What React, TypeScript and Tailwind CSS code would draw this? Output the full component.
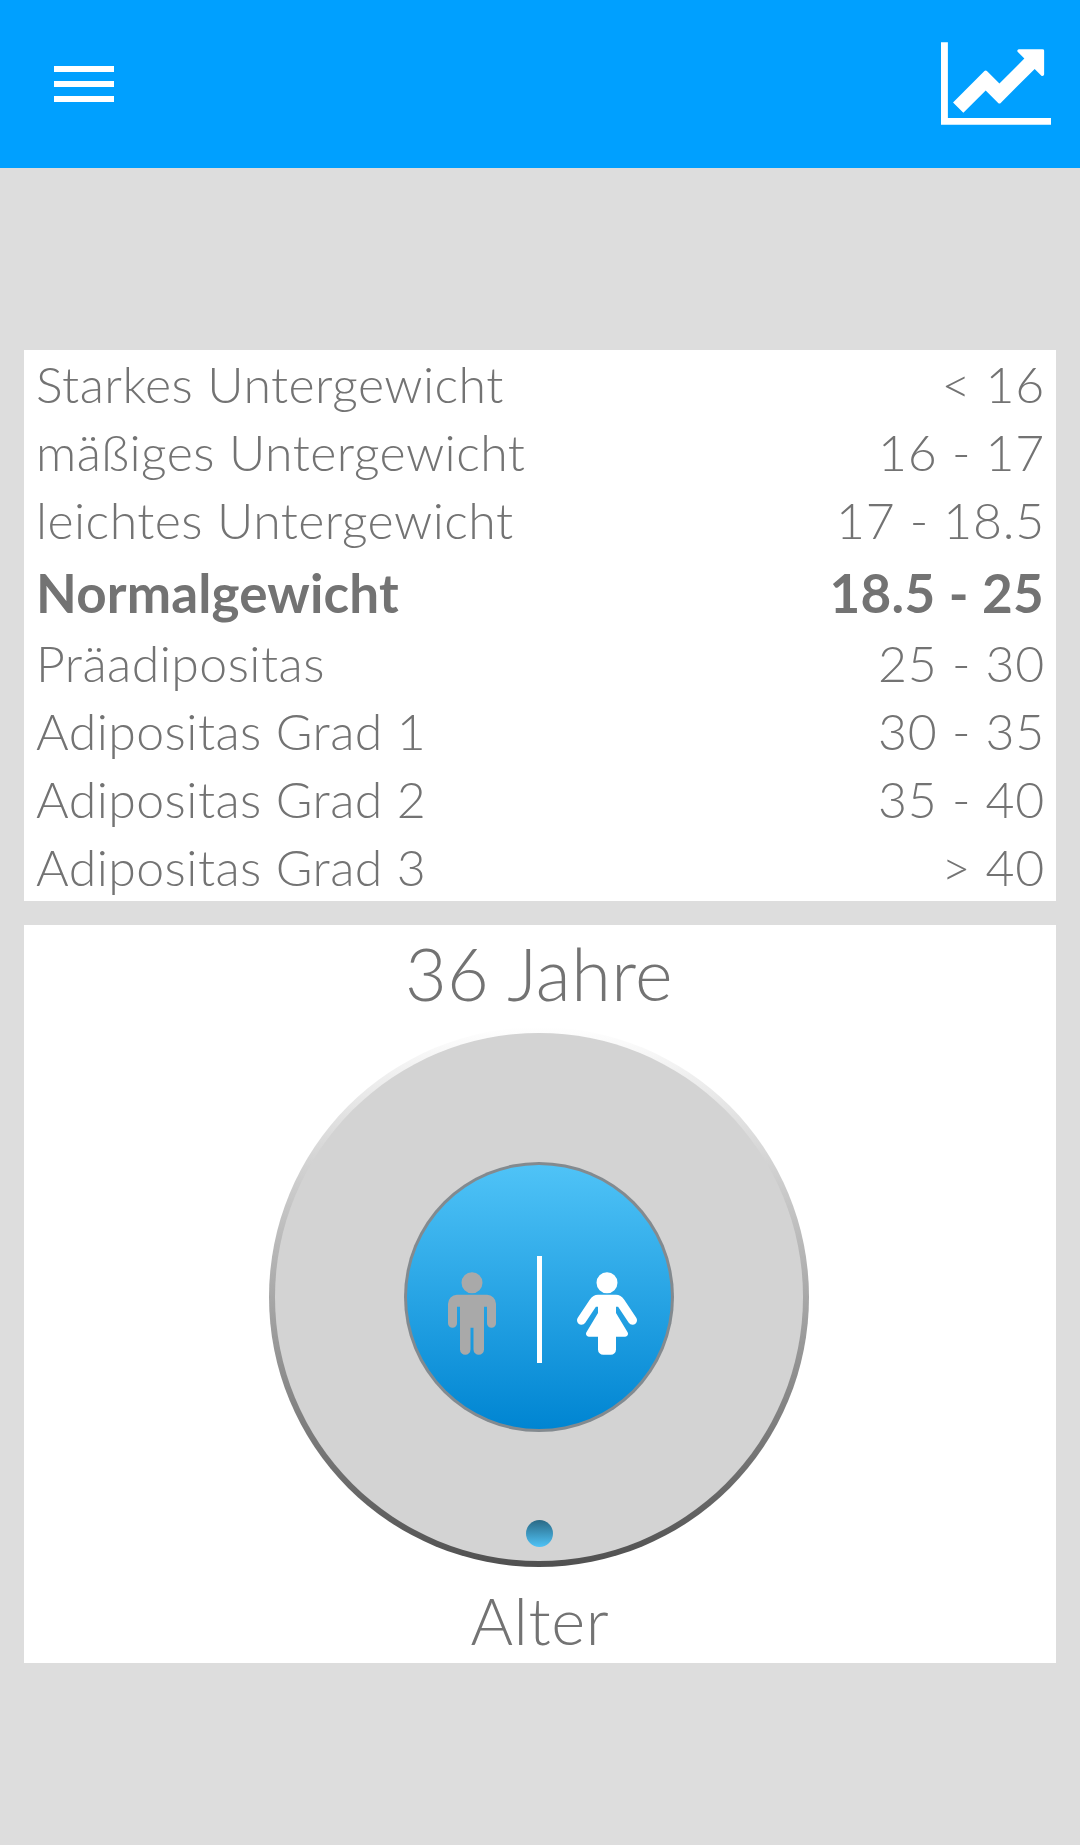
type Category = {
  label: string;
  range: string;
  active?: boolean;
};

const categories: Category[] = [
  { label: "Starkes Untergewicht", range: "< 16" },
  { label: "mäßiges Untergewicht", range: "16 - 17" },
  { label: "leichtes Untergewicht", range: "17 - 18.5" },
  { label: "Normalgewicht", range: "18.5 - 25", active: true },
  { label: "Präadipositas", range: "25 - 30" },
  { label: "Adipositas Grad 1", range: "30 - 35" },
  { label: "Adipositas Grad 2", range: "35 - 40" },
  { label: "Adipositas Grad 3", range: "> 40" },
];

const ChartIcon = () => (
  <svg viewBox="0 -1408 2048 1536" className="h-[83px] w-[110px] fill-white">
    <path
      transform="scale(1,-1)"
      d="M2048 0v-128h-2048v1536h128v-1408h1920zM1920 1248v-435q0 -21 -19.5 -29.5t-35.5 7.5l-121 121l-633 -633q-10 -10 -23 -10t-23 10l-233 233l-416 -416l-192 192l585 585q10 10 23 10t23 -10l233 -233l464 464l-121 121q-16 16 -7.5 35.5t29.5 19.5h435q14 0 23 -9t9 -23z"
    />
  </svg>
);

const MaleIcon = () => (
  <svg viewBox="0 -1504 1024 1760" className="h-[83px] w-12 fill-[#a9a9a9]">
    <path
      transform="scale(1,-1)"
      d="M1024 832v-416q0 -40 -28 -68t-68 -28t-68 28t-28 68v352h-64v-912q0 -46 -33 -79t-79 -33t-79 33t-33 79v464h-64v-464q0 -46 -33 -79t-79 -33t-79 33t-33 79v912h-64v-352q0 -40 -28 -68t-68 -28t-68 28t-28 68v416q0 80 56 136t136 56h640q80 0 136 -56t56 -136zM736 1280q0 -93 -65.5 -158.5t-158.5 -65.5t-158.5 65.5t-65.5 158.5t65.5 158.5t158.5 65.5t158.5 -65.5t65.5 -158.5z"
    />
  </svg>
);

const FemaleIcon = () => (
  <svg viewBox="0 -1504 1280 1760" className="h-[83px] w-[60px] fill-white">
    <path
      transform="scale(1,-1)"
      d="M1280 480q0 -40 -28 -68t-68 -28q-51 0 -80 43l-227 341h-45v-132l247 -411q9 -15 9 -33q0 -26 -19 -45t-45 -19h-192v-272q0 -46 -33 -79t-79 -33h-160q-46 0 -79 33t-33 79v272h-192q-26 0 -45 19t-19 45q0 18 9 33l247 411v132h-45l-227 -341q-29 -43 -80 -43q-40 0 -68 28t-28 68q0 29 16 53l256 384q73 107 176 107h384q103 0 176 -107l256 -384q16 -24 16 -53zM864 1280q0 -93 -65.5 -158.5t-158.5 -65.5t-158.5 65.5t-65.5 158.5t65.5 158.5t158.5 65.5t158.5 -65.5t65.5 -158.5z"
    />
  </svg>
);

const Header = () => (
  <header className="flex h-[168px] items-center justify-between bg-[#00a0ff] pr-[29px] pl-[54px]">
    <button aria-label="Menü" className="flex flex-col gap-[9px]">
      <span className="h-1.5 w-[60px] bg-white" />
      <span className="h-1.5 w-[60px] bg-white" />
      <span className="h-1.5 w-[60px] bg-white" />
    </button>
    <button aria-label="Verlauf" className="pb-0.5">
      <ChartIcon />
    </button>
  </header>
);

const CategoryRow = ({ label, range, active }: Category) => (
  <li
    className={
      active
        ? "flex h-[75px] justify-between text-[53px] leading-[78px] font-bold tracking-[0.15px]"
        : "flex h-[68px] justify-between text-[50px] leading-[69px] font-light tracking-[0.45px]"
    }
  >
    <span>{label}</span>
    <span className={active ? "tracking-[0.3px]" : "-mr-px tracking-[0.75px]"}>{range}</span>
  </li>
);

const AgeDial = () => (
  <div className="flex size-[540px] rounded-full bg-linear-to-b/srgb from-white to-[#505050] p-1.5">
    <div className="relative flex flex-1 items-center justify-center rounded-full bg-[#d3d3d3]">
      <div className="flex size-[270px] rounded-full bg-[#838a8f] p-[3px]">
        <div className="flex flex-1 items-center rounded-full bg-linear-to-b/srgb from-[#4fc3f7] to-[#0085d2] pt-[33px] pl-[41px]">
          <MaleIcon />
          <span className="mr-[35px] mb-2 ml-[41px] h-[107px] w-[5px] bg-white" />
          <FemaleIcon />
        </div>
      </div>
      {/* position marker */}
      <span className="absolute bottom-[14px] left-[250.5px] size-[27px] rounded-full bg-linear-to-b/srgb from-[#2a6985] to-[#4fc3f7]" />
    </div>
  </div>
);

export default function App() {
  return (
    <div className="h-[1845px] w-[1080px] bg-[#dddddd] font-[Lato,sans-serif] text-[#737373]">
      <Header />
      <main className="flex flex-col gap-6 px-6 pt-[182px]">
        <ul className="h-[551px] bg-white px-3">
          {categories.map((category) => (
            <CategoryRow key={category.label} {...category} />
          ))}
        </ul>
        <section className="flex h-[738px] flex-col items-center bg-white pr-0.5">
          <h2 className="h-[102px] text-[72px] leading-[96px] font-light tracking-[0.45px]">36 Jahre</h2>
          <AgeDial />
          <p className="h-[96px] pl-0.5 text-[65px] leading-[106px] font-light tracking-[0.6px]">Alter</p>
        </section>
      </main>
    </div>
  );
}
